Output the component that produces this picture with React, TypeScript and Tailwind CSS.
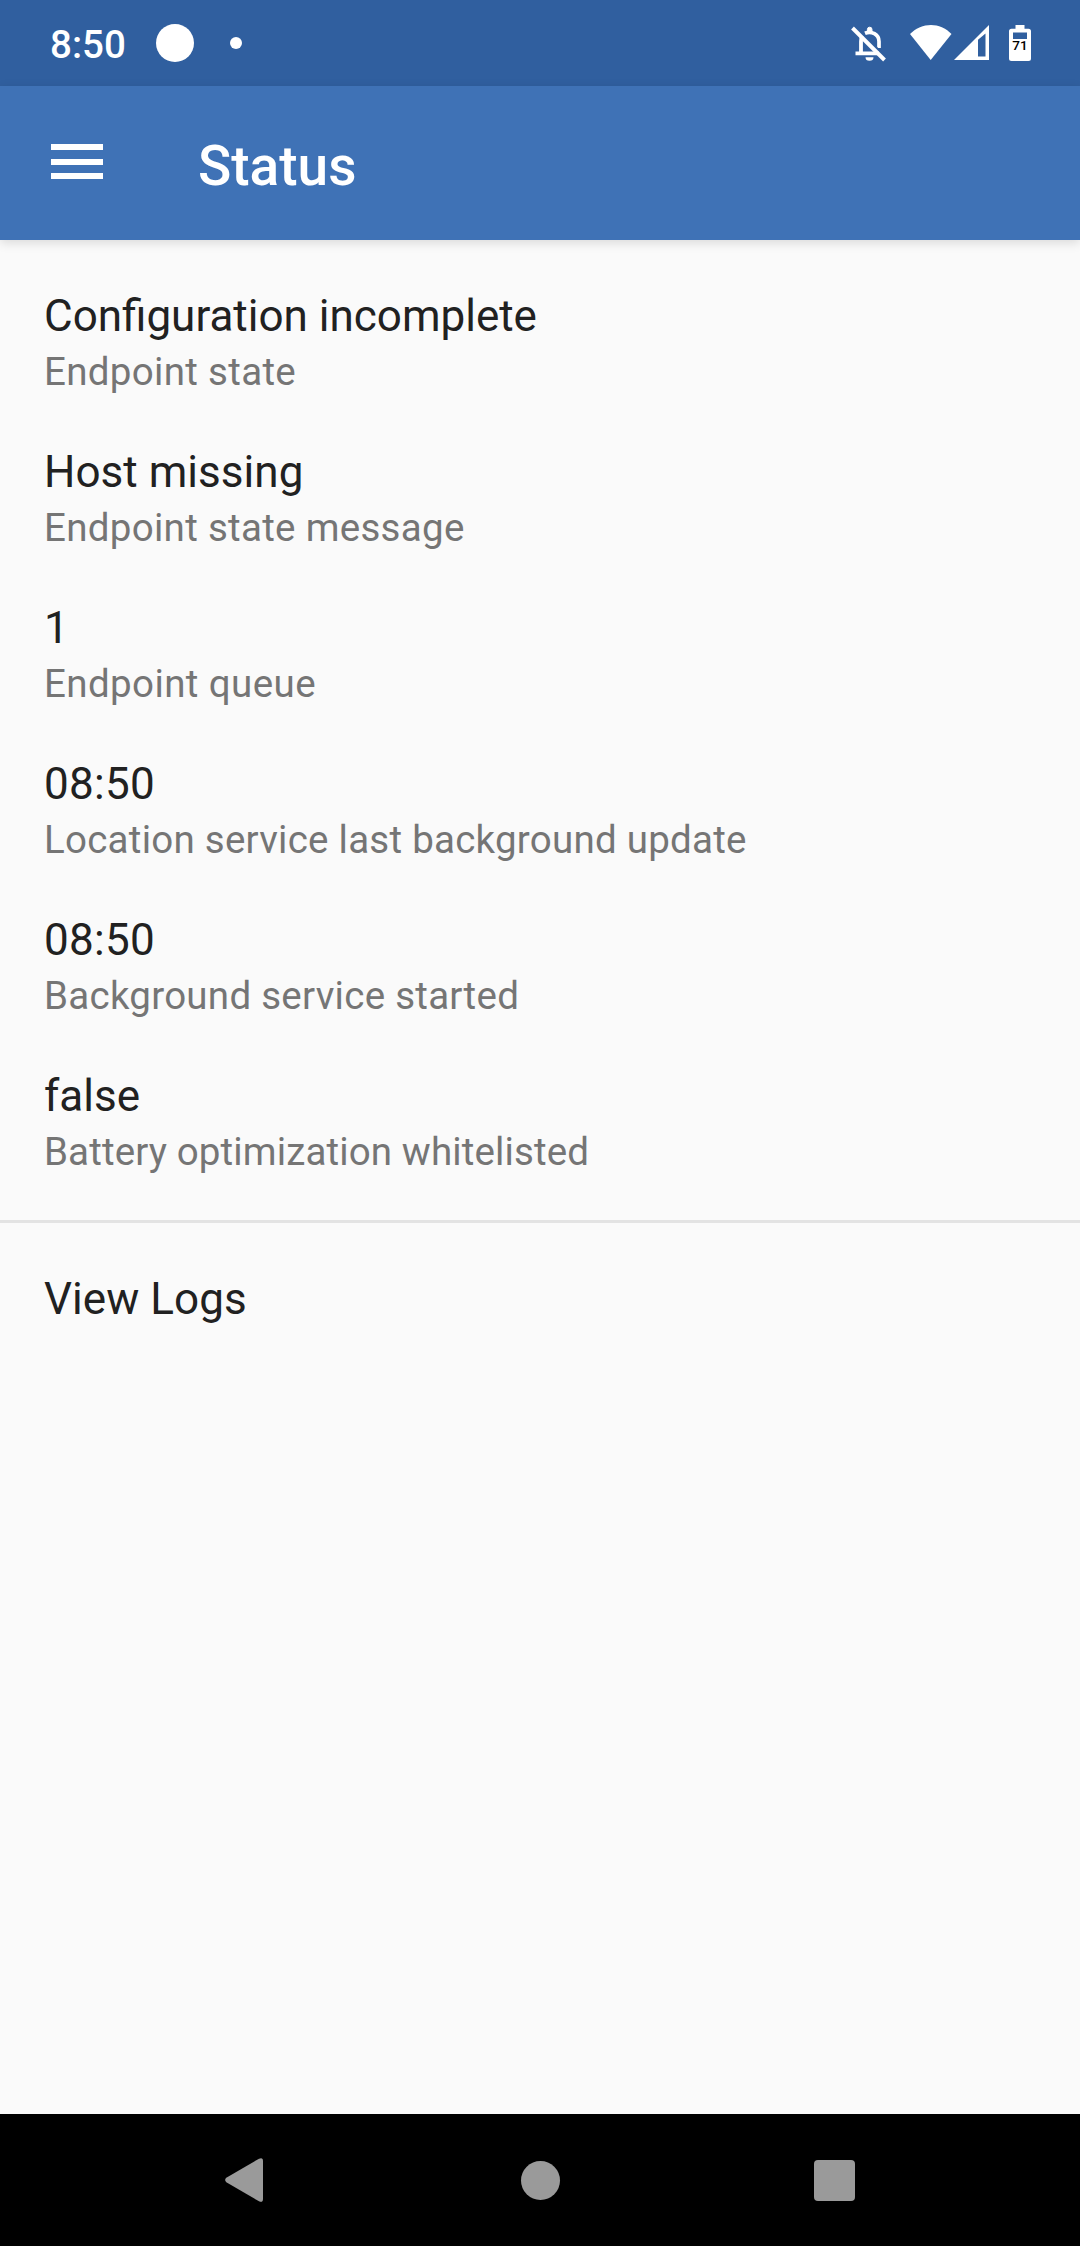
const rows = [
  { value: "Configuration incomplete", label: "Endpoint state", valueClass: "", labelClass: "tracking-[0.32px]" },
  { value: "Host missing", label: "Endpoint state message", valueClass: "tracking-[0.04px]", labelClass: "tracking-[0.3px]" },
  { value: "1", label: "Endpoint queue", valueClass: "", labelClass: "tracking-[0.4px]" },
  { value: "08:50", label: "Location service last background update", valueClass: "tracking-[0.3px]", labelClass: "tracking-[0.25px]" },
  { value: "08:50", label: "Background service started", valueClass: "tracking-[0.3px]", labelClass: "tracking-[0.27px]" },
  { value: "false", label: "Battery optimization whitelisted", valueClass: "", labelClass: "tracking-[0.13px]" },
];

function StatusBar() {
  return (
    <div className="flex h-[86px] shrink-0 items-start bg-[#305f9f] pl-[50px] pr-[49px] text-white">
      <span className="mt-[20px] w-[76px] whitespace-nowrap text-[38.5px] font-medium leading-[50px]">8:50</span>
      <span className="ml-[30px] mt-[24px] size-[38px] rounded-full bg-white" />
      <span className="ml-[36px] mt-[37px] size-[12px] rounded-full bg-white" />
      <svg className="ml-auto mt-[24px] h-[38px] w-[36px]" viewBox="0 0 36 38" fill="none" stroke="white">
        <path d="M11 12C10.200 14 10 15.500 10 17.500V29M4.500 29.300H28" strokeWidth="3.800" />
        <path d="M14 9.300C20.500 6.500 28 10.500 28 17.500V24" strokeWidth="3.700" />
        <path d="M16.400 7.500V5.500a2.300 2.300 0 0 1 4.600 0V7.500Z" fill="white" strokeWidth="1" />
        <path d="M14.500 33.200h8a4 3.500 0 0 1-8 0Z" fill="white" stroke="none" />
        <path d="M4.200 2.200L36 34" stroke="#305f9f" strokeWidth="1.600" />
        <path d="M1.500 4L33.500 36" strokeWidth="3.900" />
      </svg>
      <svg className="ml-[23px] mt-[25px] h-[36px] w-[42px]" viewBox="0 0 42 36" fill="white">
        <path d="M0 9C12-3 30-3 41.500 9L20.700 35Z" />
      </svg>
      <svg className="ml-[2px] mt-[25px] h-[36px] w-[36px]" viewBox="0 0 36 36">
        <path fill="white" fillRule="evenodd" d="M0 35L35 0V35ZM24 14.700V31.500H31.500V8.500Z" />
      </svg>
      <div className="relative ml-[19px] mt-[25px] h-[36px] w-[22px]">
        <svg className="h-[36px] w-[22px]" viewBox="0 0 22 36">
          <path fill="white" d="M6.500 0h9v3.700h4a2.500 2.500 0 0 1 2.500 2.500V33.500a2.500 2.500 0 0 1-2.500 2.500h-17A2.500 2.500 0 0 1 0 33.500V6.200a2.500 2.500 0 0 1 2.500-2.500h4Z" />
          <path fill="#305f9f" d="M4 7.500h14v6.500H4Z" />
        </svg>
        <span className="absolute inset-x-0 top-[12px] text-center text-[13.5px] font-medium leading-[16px] text-black">71</span>
      </div>
    </div>
  );
}

function AppBar() {
  return (
    <header className="z-10 flex h-[154px] shrink-0 items-start bg-[#3f72b6] pl-[51px] text-white shadow-[0_3px_10px_rgba(0,0,0,0.13)]">
      <div className="mt-[58px] flex w-[52px] flex-col gap-[8.500px]">
        <span className="h-[6px] bg-white" />
        <span className="h-[6px] bg-white" />
        <span className="h-[6px] bg-white" />
      </div>
      <h1 className="ml-[95px] mt-[48px] text-[55px] font-medium leading-[64px]">Status</h1>
    </header>
  );
}

function NavBar() {
  return (
    <nav className="flex h-[132px] shrink-0 items-center justify-between bg-black pl-[225px] pr-[225px]">
      <svg className="h-[44px] w-[38px]" viewBox="0 0 38 44" fill="#9a9a9a">
        <path d="M1.300 19.800L34 0.700Q38-1 38 3V41Q38 45 34 43.300L1.300 24.200Q-1 22 1.300 19.800Z" />
      </svg>
      <span className="ml-[3px] size-[39px] rounded-full bg-[#9a9a9a]" />
      <span className="size-[41px] rounded-[4px] bg-[#9a9a9a]" />
    </nav>
  );
}

export default function App() {
  return (
    <div className="flex h-[2246px] w-[1080px] flex-col overflow-hidden bg-[#fafafa] font-['Roboto',sans-serif]">
      <StatusBar />
      <AppBar />
      <main className="flex-1">
        <ul className="flex flex-col gap-[44px] px-[44px] pb-[40px] pt-[48px]">
          {rows.map((row) => (
            <li key={row.label} className="leading-[56px]">
              <p className={`text-[44px] text-[#212121] ${row.valueClass}`}>{row.value}</p>
              <p className={`text-[38.5px] text-[#757575] ${row.labelClass}`}>{row.label}</p>
            </li>
          ))}
        </ul>
        <div className="h-[3px] bg-[#e3e3e3]" />
        <p className="px-[44px] pt-[48px] text-[44px] leading-[56px] tracking-[0.06px] text-[#212121]">View Logs</p>
      </main>
      <NavBar />
    </div>
  );
}
